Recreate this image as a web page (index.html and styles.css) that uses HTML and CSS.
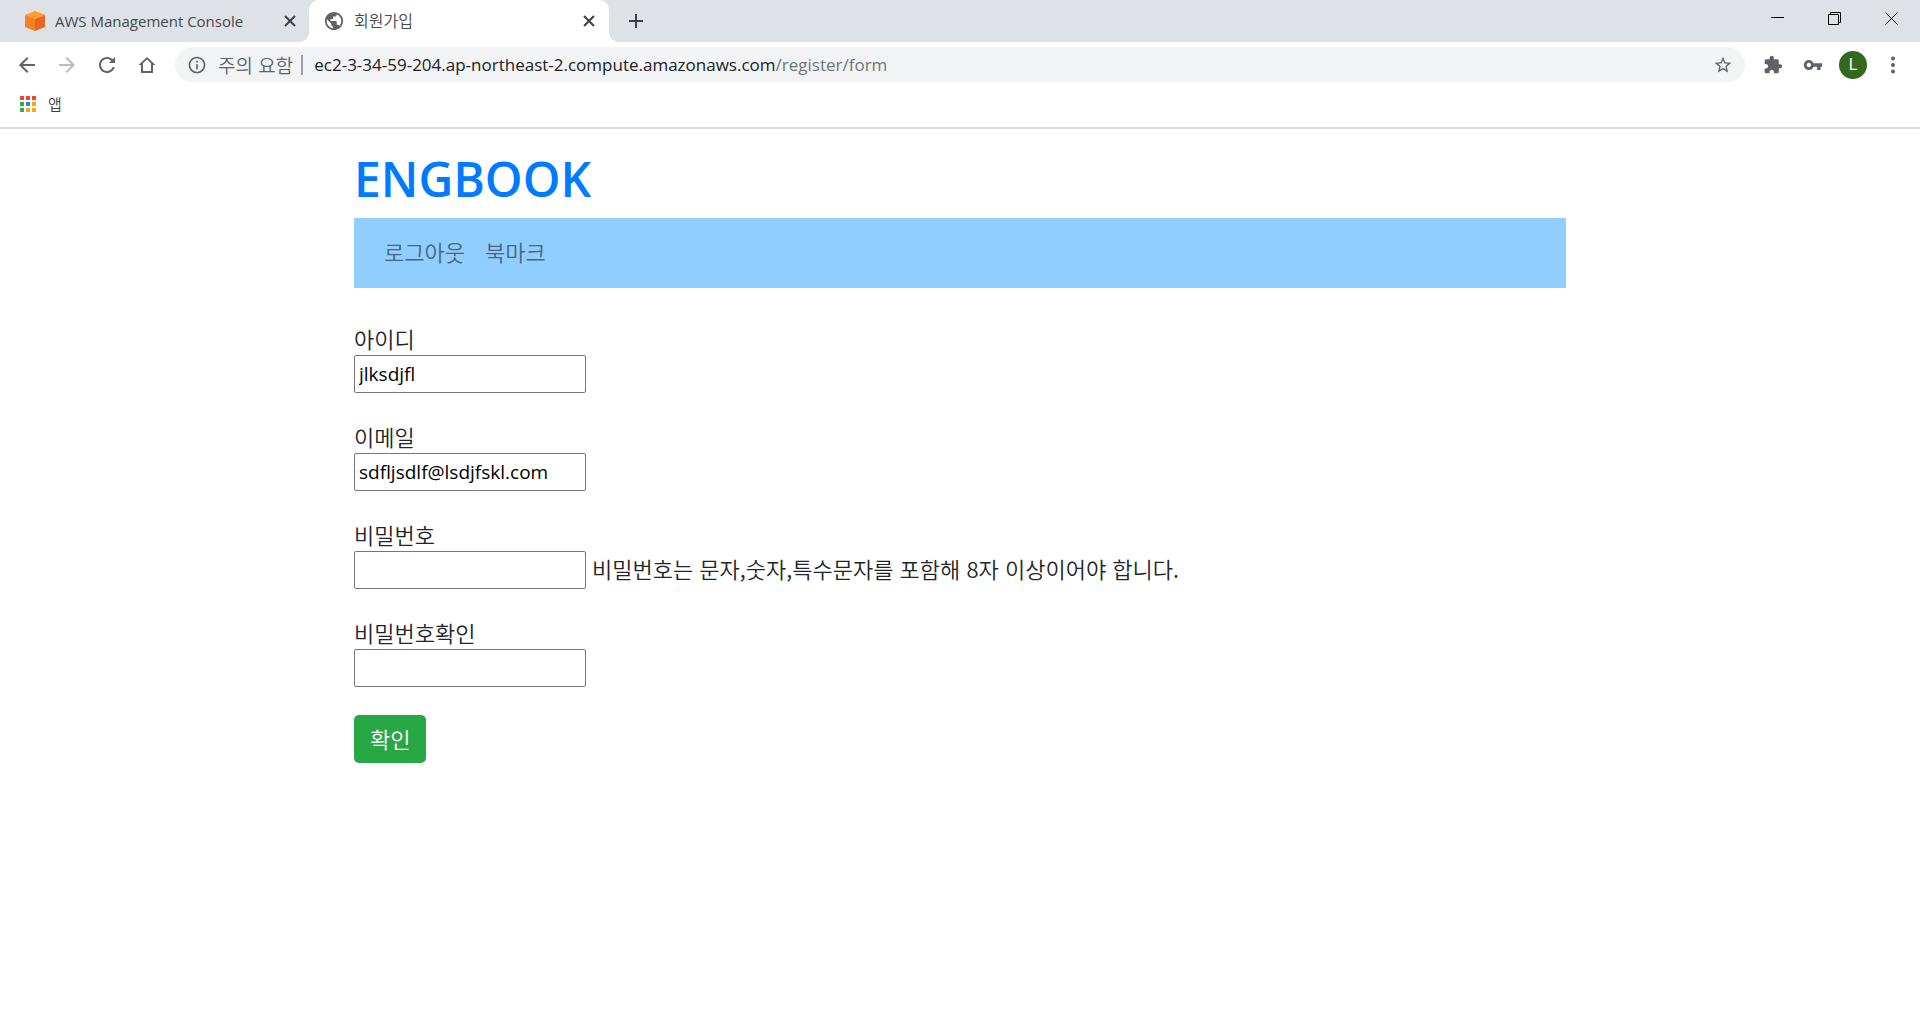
FILE: index.html
```html
<!DOCTYPE html>
<html lang="ko">
<head>
<meta charset="utf-8">
<meta name="viewport" content="width=device-width, initial-scale=1">
<title>회원가입</title>
<link rel="stylesheet" href="styles.css">
</head>
<body>
<header class="browser">
  <div class="tab-strip">
    <div class="tab">
      <svg class="tab-icon" viewBox="0 0 20 20" aria-hidden="true">
        <path d="M10 0 20 4 10 8 0 4z" fill="#ff9d2b"/>
        <path d="M0 4 10 8V20L0 16z" fill="#f58220"/>
        <path d="M20 4 10 8V20L20 16z" fill="#ec6420"/>
      </svg>
      <span class="tab-title">AWS Management Console</span>
      <button class="icon-button tab-close" aria-label="탭 닫기"><svg viewBox="0 0 12 12"><path d="M1 1 11 11M11 1 1 11"/></svg></button>
    </div>
    <div class="tab tab-active">
      <svg class="tab-icon" viewBox="1 1 22 22" aria-hidden="true"><path fill="#5f6368" d="M12 2C6.480 2 2 6.480 2 12s4.480 10 10 10 10-4.480 10-10S17.520 2 12 2zm-1 17.930c-3.950-.49-7-3.850-7-7.930 0-.62.080-1.210.21-1.790L9 15v1c0 1.100.9 2 2 2v1.930zm6.900-2.540c-.26-.81-1-1.390-1.900-1.390h-1v-3c0-.55-.45-1-1-1H8v-2h2c.55 0 1-.45 1-1V7h2c1.100 0 2-.9 2-2v-.41c2.930 1.190 5 4.060 5 7.410 0 2.080-.8 3.970-2.100 5.390z"/></svg>
      <span class="tab-title">회원가입</span>
      <button class="icon-button tab-close" aria-label="탭 닫기"><svg viewBox="0 0 12 12"><path d="M1 1 11 11M11 1 1 11"/></svg></button>
    </div>
    <button class="icon-button new-tab" aria-label="새 탭"><svg viewBox="0 0 16 16"><path d="M8 1V15M1 8H15"/></svg></button>
    <div class="window-controls">
      <button class="icon-button" aria-label="최소화"><svg viewBox="0 0 13 13"><path d="M0 5.500H13"/></svg></button>
      <button class="icon-button" aria-label="이전 크기로 복원"><svg viewBox="0 0 13 13"><path d="M.5 2.500H10.500V12.500H.5zM2.500 2.500V.5H12.500V10.500H10.500"/></svg></button>
      <button class="icon-button" aria-label="닫기"><svg viewBox="0 0 13 13"><path d="M.5.5 12.500 12.500M12.500.5.5 12.500"/></svg></button>
    </div>
  </div>

  <div class="toolbar">
    <button class="icon-button tool" aria-label="뒤로"><svg viewBox="0 0 24 24"><path d="M20 11H7.830l5.590-5.590L12 4l-8 8 8 8 1.410-1.410L7.830 13H20v-2z"/></svg></button>
    <button class="icon-button tool tool-disabled" aria-label="앞으로" disabled><svg viewBox="0 0 24 24"><path d="M12 4l-1.410 1.410L16.170 11H4v2h12.170l-5.580 5.590L12 20l8-8z"/></svg></button>
    <button class="icon-button tool" aria-label="새로고침"><svg viewBox="0 0 24 24"><path d="M17.650 6.350C16.200 4.900 14.210 4 12 4c-4.420 0-7.990 3.580-7.990 8s3.570 8 7.990 8c3.730 0 6.840-2.550 7.730-6h-2.080c-.82 2.330-3.040 4-5.650 4-3.310 0-6-2.690-6-6s2.690-6 6-6c1.660 0 3.140.69 4.220 1.780L14 10h6V4z"/></svg></button>
    <button class="icon-button tool" aria-label="홈"><svg viewBox="0 0 24 24"><path d="M12 4 3.500 12H6v8h12v-8h2.500zM12 6.500l4 3.800V18H8v-7.700z"/></svg></button>
    <div class="omnibox">
      <svg class="info" viewBox="0 0 24 24" aria-hidden="true"><path d="M11 17h2v-6h-2v6zm1-15C6.480 2 2 6.480 2 12s4.480 10 10 10 10-4.480 10-10S17.520 2 12 2zm0 18c-4.410 0-8-3.590-8-8s3.590-8 8-8 8 3.590 8 8-3.590 8-8 8zM11 9h2V7h-2v2z"/></svg>
      <span class="warning">주의 요함</span>
      <div class="address" role="textbox" aria-label="주소창" contenteditable="true" spellcheck="false">ec2-3-34-59-204.ap-northeast-2.compute.amazonaws.com<span class="path">/register/form</span></div>
      <button class="icon-button star" aria-label="북마크 추가"><svg viewBox="0 0 24 24"><path d="M22 9.240l-7.190-.62L12 2 9.190 8.630 2 9.240l5.460 4.730L5.820 21 12 17.270 18.180 21l-1.630-7.030L22 9.240zM12 15.400l-3.760 2.270 1-4.280-3.320-2.880 4.380-.38L12 6.100l1.710 4.040 4.380.38-3.320 2.880 1 4.280L12 15.400z"/></svg></button>
    </div>
    <button class="icon-button tool tool-small" aria-label="확장 프로그램"><svg viewBox="0 0 24 24"><path d="M20.500 11H19V7c0-1.100-.9-2-2-2h-4V3.500C13 2.120 11.880 1 10.500 1S8 2.120 8 3.500V5H4c-1.100 0-1.990.9-1.990 2v3.800H3.500c1.490 0 2.700 1.210 2.700 2.700s-1.210 2.700-2.700 2.700H2V20c0 1.100.9 2 2 2h3.800v-1.500c0-1.490 1.210-2.700 2.700-2.700 1.490 0 2.700 1.210 2.700 2.700V22H17c1.100 0 2-.9 2-2v-4h1.500c1.380 0 2.500-1.120 2.500-2.500S21.880 11 20.500 11z"/></svg></button>
    <button class="icon-button tool tool-small" aria-label="비밀번호 관리"><svg viewBox="0 0 24 24"><path d="M12.650 10C11.830 7.670 9.610 6 7 6c-3.310 0-6 2.690-6 6s2.690 6 6 6c2.610 0 4.830-1.670 5.650-4H17v4h4v-4h2v-4H12.650zM7 14.600c-1.430 0-2.600-1.170-2.600-2.600S5.570 9.400 7 9.400s2.600 1.170 2.600 2.600-1.170 2.600-2.600 2.600z"/></svg></button>
    <button class="icon-button tool" aria-label="프로필"><span class="avatar">L</span></button>
    <button class="icon-button tool" aria-label="메뉴"><svg viewBox="0 0 24 24"><circle cx="12" cy="5.500" r="2"/><circle cx="12" cy="12" r="2"/><circle cx="12" cy="18.500" r="2"/></svg></button>
  </div>

  <nav class="bookmarks" aria-label="북마크바">
    <a class="bookmark" href="#">
      <svg class="apps" viewBox="0 0 16 16" aria-hidden="true">
        <path fill="#f44336" d="M0 0h4v4H0zM6 0h4v4H6zM12 0h4v4h-4z"/>
        <path fill="#34a853" d="M0 6h4v4H0zM0 12h4v4H0z"/>
        <path fill="#1e88f5" d="M6 6h4v4H6z"/>
        <path fill="#f9ab00" d="M12 6h4v4h-4zM6 12h4v4H6zM12 12h4v4h-4z"/>
      </svg>
      <span>앱</span>
    </a>
  </nav>
</header>

<main class="container">
  <h1 class="brand"><a href="#">ENGBOOK</a></h1>
  <nav class="site-nav">
    <a href="#">로그아웃</a>
    <a href="#">북마크</a>
  </nav>
  <form class="register">
    <div class="fields">
      <div class="field">
        <label for="userid">아이디</label>
        <div class="control"><input id="userid" type="text" value="jlksdjfl" spellcheck="false"></div>
      </div>
      <div class="field">
        <label for="email">이메일</label>
        <div class="control"><input id="email" type="email" value="sdfljsdlf@lsdjfskl.com" spellcheck="false"></div>
      </div>
      <div class="field">
        <label for="password">비밀번호</label>
        <div class="control"><input id="password" type="password" aria-describedby="password-hint"><span class="hint" id="password-hint">비밀번호는 문자,숫자,특수문자를 포함해 8자 이상이어야 합니다.</span></div>
      </div>
      <div class="field">
        <label for="password2">비밀번호확인</label>
        <div class="control"><input id="password2" type="password"></div>
      </div>
    </div>
    <button class="submit" type="button">확인</button>
  </form>
</main>
</body>
</html>
```
FILE: styles.css
```css
* {
  box-sizing: border-box;
}

body {
  margin: 0;
  background: #fff;
  color: #212529;
  font-family: "Noto Sans CJK KR", sans-serif;
  font-weight: 350;
  font-size: 22px;
  line-height: 30px;
}

a {
  color: inherit;
  text-decoration: none;
}

svg {
  display: block;
}

.icon-button {
  display: flex;
  align-items: center;
  justify-content: center;
  flex: none;
  padding: 0;
  border: 0;
  background: none;
}

/* Browser frame */
.browser {
  border-bottom: 2px solid #dadce0;
}

.tab-strip {
  display: flex;
  height: 42px;
  background: #dee1e6;
}

.tab {
  display: flex;
  align-items: center;
  width: 300px;
  padding: 0 13px 0 15px;
  color: #45494d;
  font-family: "Open Sans", "Noto Sans CJK KR", sans-serif;
  font-size: 15px;
  line-height: 20px;
}

.tab:first-child {
  margin-left: 9px;
  padding: 0 12px 0 16px;
}

.tab-active {
  position: relative;
  border-radius: 10px 10px 0 0;
  background: #fff;
}

.tab-active::before,
.tab-active::after {
  content: "";
  position: absolute;
  bottom: 0;
  width: 10px;
  height: 10px;
}

.tab-active::before {
  right: 100%;
  background: radial-gradient(circle at 0 0, transparent 10px, #fff 10px);
}

.tab-active::after {
  left: 100%;
  background: radial-gradient(circle at 100% 0, transparent 10px, #fff 10px);
}

.tab-icon {
  width: 20px;
  height: 20px;
  margin-right: 10px;
}

.tab-title {
  flex: 1;
  padding-bottom: 1px;
  font-weight: 400;
  white-space: nowrap;
}

.tab-active .tab-title {
  font-weight: 350;
  font-size: 16px;
}

.tab-close {
  width: 14px;
  height: 20px;
}

.tab-close svg {
  width: 12px;
  height: 12px;
}

.tab-close path,
.new-tab path {
  fill: none;
  stroke: #3c4043;
  stroke-width: 2;
}

.new-tab {
  width: 54px;
}

.new-tab svg {
  width: 16px;
  height: 16px;
}

.window-controls {
  display: flex;
  margin-left: auto;
}

.window-controls .icon-button {
  width: 57px;
  height: 36px;
}

.window-controls svg {
  width: 13px;
  height: 13px;
}

.window-controls path {
  fill: none;
  stroke: #000;
  stroke-width: 1;
}

.toolbar {
  display: flex;
  align-items: center;
  height: 45px;
  padding: 0 7px;
}

.tool {
  width: 40px;
  height: 40px;
}

.tool svg {
  width: 24px;
  height: 24px;
  fill: #5f6368;
}

.tool-disabled svg {
  fill: #babcbe;
}

.tool-small svg {
  width: 20px;
  height: 20px;
}

.omnibox {
  display: flex;
  align-items: center;
  flex: 1;
  height: 35px;
  margin: 0 8px;
  padding: 0 12px;
  border-radius: 18px;
  background: #f1f3f4;
  line-height: 24px;
}

.info {
  width: 20px;
  height: 20px;
  margin-right: 11px;
  fill: #5f6368;
}

.warning {
  margin-right: 11px;
  padding-right: 8px;
  border-right: 2px solid #9aa0a6;
  color: #5f6368;
  font-size: 19px;
  line-height: 20px;
  white-space: nowrap;
}

.address {
  flex: 1;
  color: #202124;
  font-family: "Open Sans", sans-serif;
  font-weight: 400;
  font-size: 17px;
  white-space: nowrap;
  outline: 0;
}

.path {
  color: #70757a;
}

.star svg {
  width: 20px;
  height: 20px;
  fill: #5f6368;
}

.avatar {
  width: 28px;
  height: 28px;
  border-radius: 50%;
  background: #33691e;
  color: #fff;
  font: 16px/28px Roboto, sans-serif;
}

.bookmarks {
  display: flex;
  height: 40px;
  padding: 7px 20px;
}

.bookmark {
  display: flex;
  align-items: center;
  gap: 12px;
  height: 20px;
  color: #3c4043;
  font-size: 15px;
  line-height: 20px;
}

.apps {
  width: 16px;
  height: 16px;
}

/* Page */
.container {
  max-width: 1212px;
  margin: 0 auto;
}

.brand {
  margin: 0;
  padding: 20px 0 9px;
  color: #007bff;
  font-family: "Open Sans", sans-serif;
  font-size: 48px;
  font-weight: 600;
  line-height: 60px;
}

.site-nav {
  display: flex;
  gap: 20px;
  padding: 18px 30px 22px;
  background: #90ceff;
  color: #48677f;
}

.register {
  padding-top: 37px;
}

.fields {
  display: grid;
  gap: 30px;
}

.field label {
  display: block;
  padding-bottom: 4px;
  line-height: 26px;
}

.control {
  display: flex;
  align-items: center;
  flex-wrap: wrap;
  gap: 6px;
}

.control input {
  width: 232px;
  height: 38px;
  padding: 2px 4px;
  border: 1px solid #767676;
  border-radius: 2px;
  background: #fff;
  color: #000;
  font-family: "Open Sans", sans-serif;
  font-size: 19px;
}

.hint {
  padding-bottom: 4px;
}

.submit {
  margin-top: 28px;
  padding: 8px 16px 10px;
  border: 0;
  border-radius: 5px;
  background: #28a745;
  color: #fff;
  font: inherit;
}
```
